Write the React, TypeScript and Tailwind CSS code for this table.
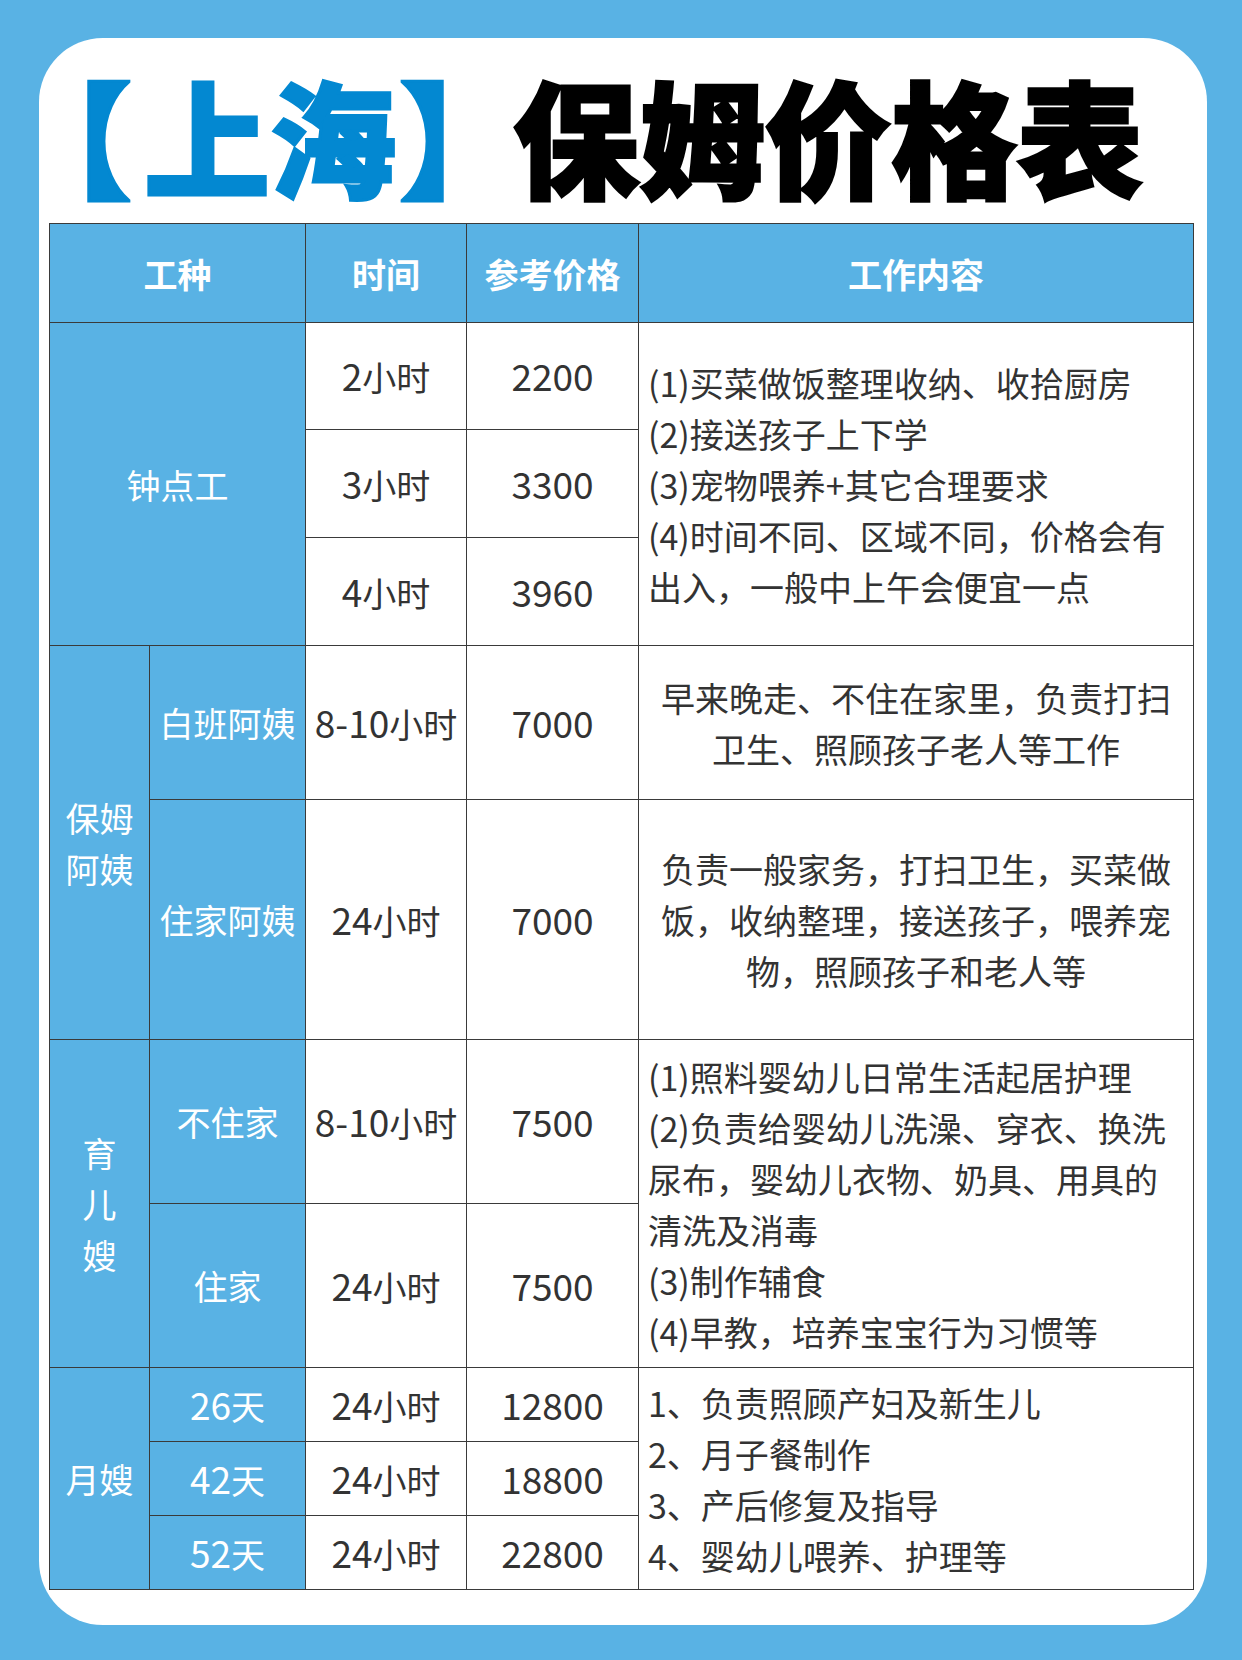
import React from 'react'

const font = "font-['Noto_Sans_CJK_SC','Noto_Sans',sans-serif]"
const line = 'border border-[#3a3a3a]'
const blueCell = `${line} bg-[#59b2e4] text-white text-center`
const whiteCell = `${line} bg-white text-[#333333] text-center`

// digits in the picture are set a little larger than the hanzi
function N({ children }: { children: React.ReactNode }) {
  return <span className="text-[37px]">{children}</span>
}

function Lines({ items, center }: { items: string[]; center?: boolean }) {
  return (
    <div className={`leading-[51px] ${center ? 'text-center' : 'text-left pl-[9px]'}`}>
      {items.map((t, i) => (
        <div key={i} className="whitespace-nowrap">{t}</div>
      ))}
    </div>
  )
}

export default function App() {
  return (
    <div className={`w-[1242px] h-[1660px] bg-[#59b2e4] pt-[38px] pl-[39px] ${font}`}>
      <div className="w-[1168px] h-[1587px] bg-white rounded-[64px] pl-[10px] flex flex-col">
        {/* Title */}
        <div className="h-[185px] flex items-center justify-start">
          <h1 className="text-[126px] leading-none font-black mt-[6px] -ml-[43px] whitespace-nowrap [-webkit-text-stroke:3px_currentColor]">
            <span className="text-[#0388d1]">
              <span className="mr-[12px]">【</span>上海<span className="ml-[3px] -mr-[12px]">】</span>
            </span>
            <span className="text-black">保姆价格表</span>
          </h1>
        </div>

        {/* Table */}
        <table className="w-[1144px] table-fixed border-collapse text-[34px]">
          <colgroup>
            <col className="w-[100px]" />
            <col className="w-[156px]" />
            <col className="w-[161px]" />
            <col className="w-[172px]" />
            <col className="w-[555px]" />
          </colgroup>
          <thead>
            <tr className="h-[99px]">
              <th colSpan={2} className={`${blueCell} text-[34px] font-bold`}>工种</th>
              <th className={`${blueCell} text-[34px] font-bold`}>时间</th>
              <th className={`${blueCell} text-[34px] font-bold`}>参考价格</th>
              <th className={`${blueCell} text-[34px] font-bold`}>工作内容</th>
            </tr>
          </thead>
          <tbody>
            {/* 钟点工 */}
            <tr className="h-[107px]">
              <td rowSpan={3} colSpan={2} className={blueCell}>钟点工</td>
              <td className={whiteCell}><N>2</N>小时</td>
              <td className={whiteCell}><N>2200</N></td>
              <td rowSpan={3} className={whiteCell}>
                <Lines
                  items={[
                    '(1)买菜做饭整理收纳、收拾厨房',
                    '(2)接送孩子上下学',
                    '(3)宠物喂养+其它合理要求',
                    '(4)时间不同、区域不同，价格会有',
                    '出入，一般中上午会便宜一点',
                  ]}
                />
              </td>
            </tr>
            <tr className="h-[108px]">
              <td className={whiteCell}><N>3</N>小时</td>
              <td className={whiteCell}><N>3300</N></td>
            </tr>
            <tr className="h-[108px]">
              <td className={whiteCell}><N>4</N>小时</td>
              <td className={whiteCell}><N>3960</N></td>
            </tr>

            {/* 保姆阿姨 */}
            <tr className="h-[154px]">
              <td rowSpan={2} className={`${blueCell} leading-[51px]`}>保姆<br />阿姨</td>
              <td className={blueCell}>白班阿姨</td>
              <td className={whiteCell}><N>8-10</N>小时</td>
              <td className={whiteCell}><N>7000</N></td>
              <td className={whiteCell}>
                <Lines center items={['早来晚走、不住在家里，负责打扫', '卫生、照顾孩子老人等工作']} />
              </td>
            </tr>
            <tr className="h-[240px]">
              <td className={blueCell}>住家阿姨</td>
              <td className={whiteCell}><N>24</N>小时</td>
              <td className={whiteCell}><N>7000</N></td>
              <td className={whiteCell}>
                <Lines
                  center
                  items={['负责一般家务，打扫卫生，买菜做', '饭，收纳整理，接送孩子，喂养宠', '物，照顾孩子和老人等']}
                />
              </td>
            </tr>

            {/* 育儿嫂 */}
            <tr className="h-[164px]">
              <td rowSpan={2} className={`${blueCell} leading-[51px]`}>育<br />儿<br />嫂</td>
              <td className={blueCell}>不住家</td>
              <td className={whiteCell}><N>8-10</N>小时</td>
              <td className={whiteCell}><N>7500</N></td>
              <td rowSpan={2} className={whiteCell}>
                <Lines
                  items={[
                    '(1)照料婴幼儿日常生活起居护理',
                    '(2)负责给婴幼儿洗澡、穿衣、换洗',
                    '尿布，婴幼儿衣物、奶具、用具的',
                    '清洗及消毒',
                    '(3)制作辅食',
                    '(4)早教，培养宝宝行为习惯等',
                  ]}
                />
              </td>
            </tr>
            <tr className="h-[164px]">
              <td className={blueCell}>住家</td>
              <td className={whiteCell}><N>24</N>小时</td>
              <td className={whiteCell}><N>7500</N></td>
            </tr>

            {/* 月嫂 */}
            <tr className="h-[74px]">
              <td rowSpan={3} className={blueCell}>月嫂</td>
              <td className={blueCell}><N>26</N>天</td>
              <td className={whiteCell}><N>24</N>小时</td>
              <td className={whiteCell}><N>12800</N></td>
              <td rowSpan={3} className={whiteCell}>
                <Lines
                  items={['1、负责照顾产妇及新生儿', '2、月子餐制作', '3、产后修复及指导', '4、婴幼儿喂养、护理等']}
                />
              </td>
            </tr>
            <tr className="h-[74px]">
              <td className={blueCell}><N>42</N>天</td>
              <td className={whiteCell}><N>24</N>小时</td>
              <td className={whiteCell}><N>18800</N></td>
            </tr>
            <tr className="h-[74px]">
              <td className={blueCell}><N>52</N>天</td>
              <td className={whiteCell}><N>24</N>小时</td>
              <td className={whiteCell}><N>22800</N></td>
            </tr>
          </tbody>
        </table>
      </div>
    </div>
  )
}
